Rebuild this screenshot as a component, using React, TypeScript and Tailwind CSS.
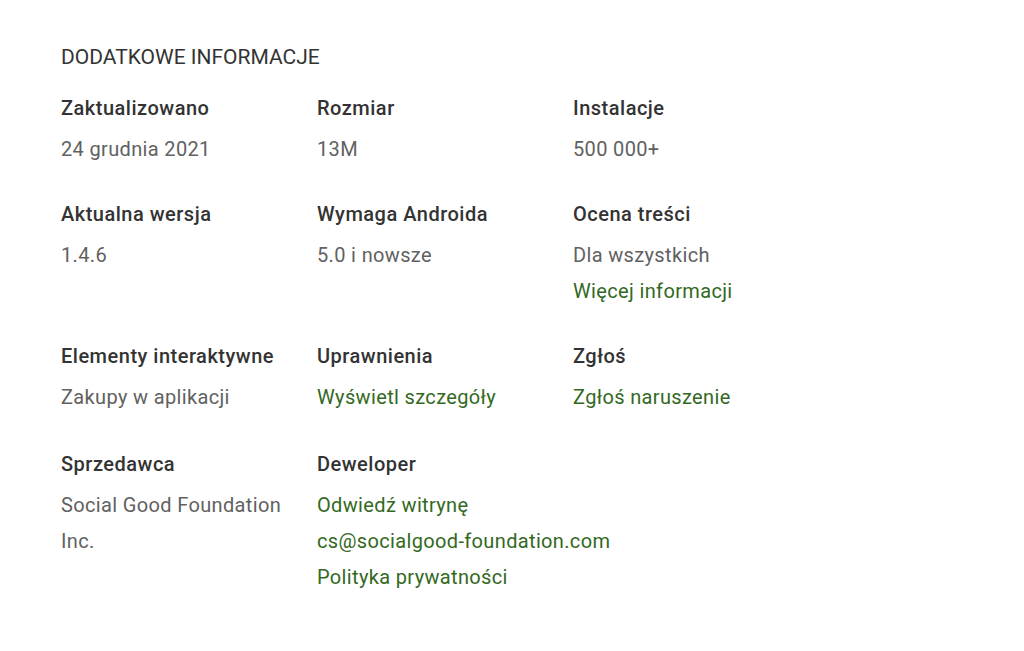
import React from "react";

type Line = { text: string; link?: boolean };
type Item = { label: string; lines: Line[] };

const rows: Item[][] = [
  [
    { label: "Zaktualizowano", lines: [{ text: "24 grudnia 2021" }] },
    { label: "Rozmiar", lines: [{ text: "13M" }] },
    { label: "Instalacje", lines: [{ text: "500 000+" }] },
  ],
  [
    { label: "Aktualna wersja", lines: [{ text: "1.4.6" }] },
    { label: "Wymaga Androida", lines: [{ text: "5.0 i nowsze" }] },
    {
      label: "Ocena treści",
      lines: [{ text: "Dla wszystkich" }, { text: "Więcej informacji", link: true }],
    },
  ],
  [
    { label: "Elementy interaktywne", lines: [{ text: "Zakupy w aplikacji" }] },
    { label: "Uprawnienia", lines: [{ text: "Wyświetl szczegóły", link: true }] },
    { label: "Zgłoś", lines: [{ text: "Zgłoś naruszenie", link: true }] },
  ],
  [
    { label: "Sprzedawca", lines: [{ text: "Social Good Foundation Inc." }] },
    {
      label: "Deweloper",
      lines: [
        { text: "Odwiedź witrynę", link: true },
        { text: "cs@socialgood-foundation.com", link: true },
        { text: "Polityka prywatności", link: true },
      ],
    },
  ],
];

function Cell({ item }: { item: Item }) {
  return (
    <div className="pr-4">
      <div className="text-[20px] leading-[24px] font-medium tracking-[0.5px] text-[#333333] mb-[11px] whitespace-nowrap">
        {item.label}
      </div>
      {item.lines.map((l) => (
        <div
          key={l.text}
          className={
            "text-[20px] leading-[36px] tracking-[0.35px] " +
            (l.link ? "text-[#33691e] whitespace-nowrap" : "text-[#616161]")
          }
        >
          {l.text}
        </div>
      ))}
    </div>
  );
}

export default function App() {
  return (
    <div
      className="min-h-screen bg-white pl-[61px] pt-[41px]"
      style={{ fontFamily: "Roboto, 'Noto Sans', sans-serif" }}
    >
      <h2 className="text-[21px] leading-[32px] font-normal text-[#333333] mb-[23px]">DODATKOWE INFORMACJE</h2>
      <div className="flex flex-col w-[768px]">
        {rows.map((row, i) => (
          <div
            key={i}
            className={
              "grid grid-cols-[256px_256px_256px] " + (i === 0 ? "" : i === 3 ? "mt-[37px]" : "mt-[35px]")
            }
          >
            {row.map((item) => (
              <Cell key={item.label} item={item} />
            ))}
          </div>
        ))}
      </div>
    </div>
  );
}
